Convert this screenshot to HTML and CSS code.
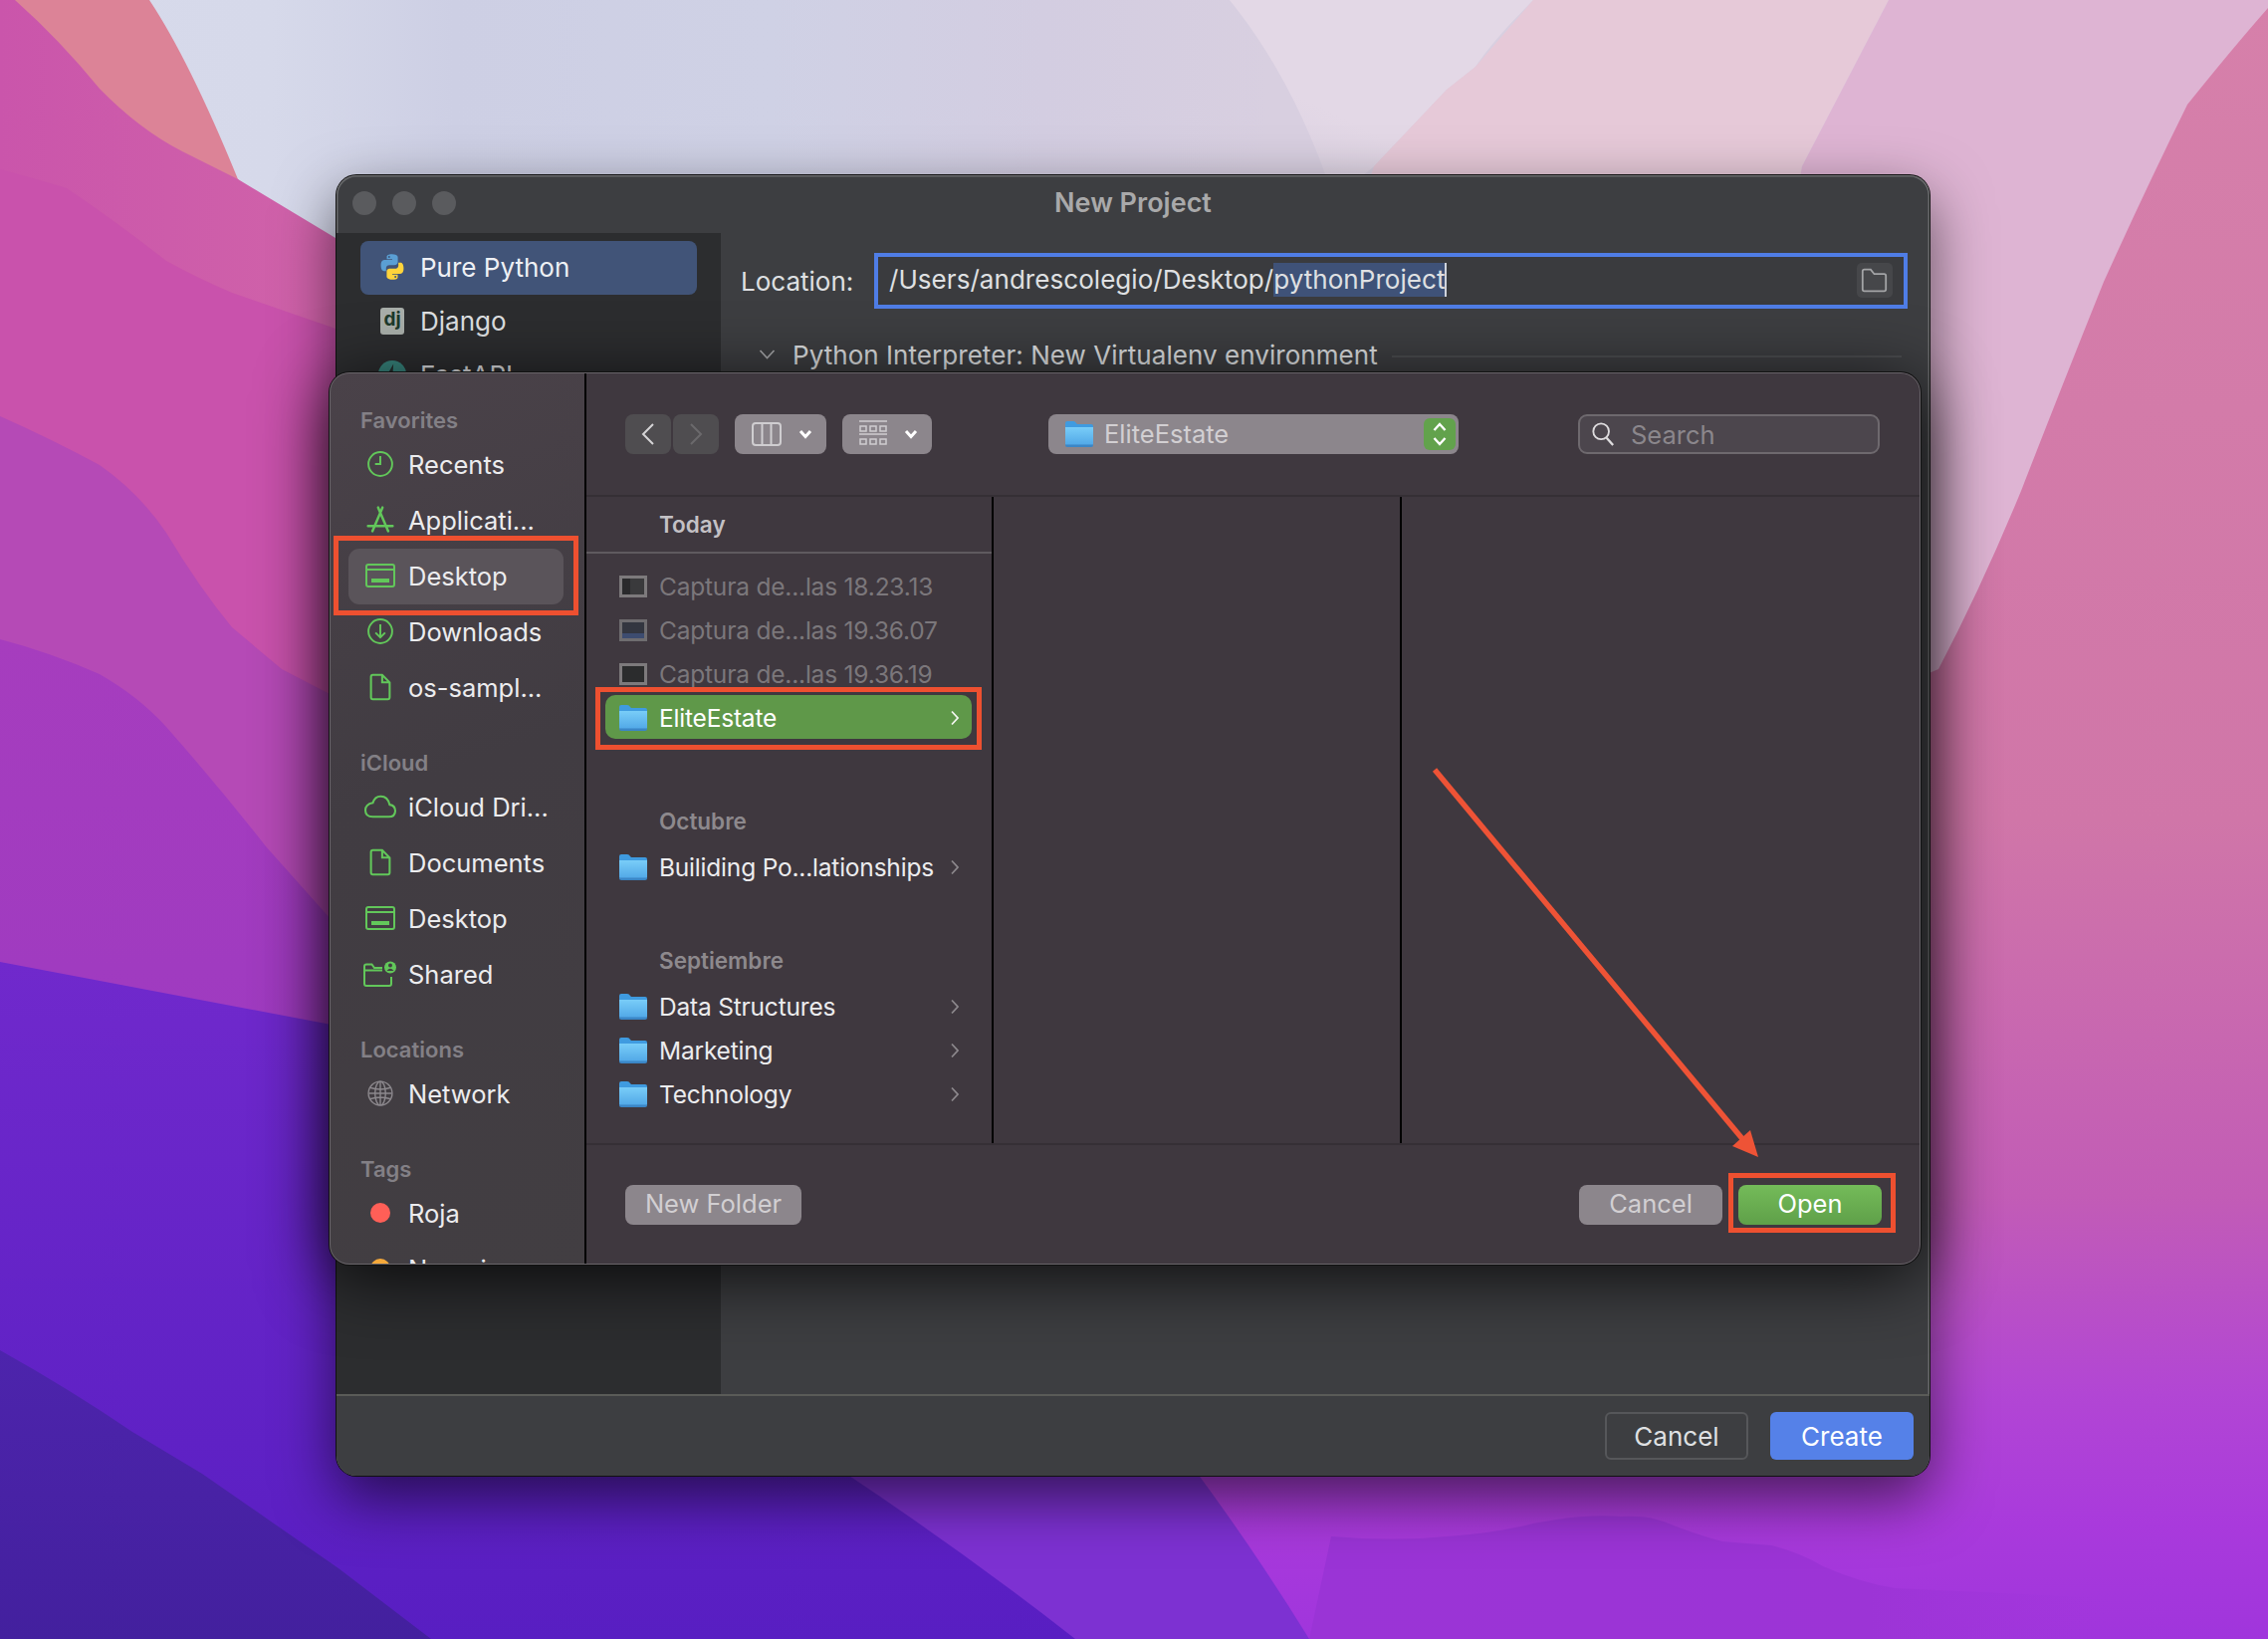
FILE: index.html
```html
<!DOCTYPE html>
<html lang="en">
<head>
    <meta charset="UTF-8" />
    <title>New Project</title>
    <link rel="stylesheet" href="styles.css">
</head>
<body>
    <!-- icon sheet -->
    <svg class="sheet" aria-hidden="true">
        <defs>
            <linearGradient id="folderFill" x1="0" y1="0" x2="0" y2="1">
                <stop offset="0" stop-color="#79cdf8"/>
                <stop offset="1" stop-color="#4fa6e6"/>
            </linearGradient>
        </defs>
        <symbol id="i-folder" viewBox="0 0 28 26">
            <path d="M0 2Q0 0 2 0H8Q10 0 11 2L12 3H26Q28 3 28 5V10H0Z" fill="#3f9be0"/>
            <path d="M0 6H28V23Q28 25 26 25H2Q0 25 0 23Z" fill="url(#folderFill)"/>
            <path d="M0 23.500H28V24Q28 26 26 26H2Q0 26 0 24Z" fill="#3b86c6"/>
        </symbol>
        <symbol id="i-clock" viewBox="-2 -2 34 34">
            <circle cx="15" cy="15" r="13.500" fill="none" stroke="currentColor" stroke-width="2.200"/>
            <path d="M15 6V15H9" fill="none" stroke="currentColor" stroke-width="2.200"/>
        </symbol>
        <symbol id="i-apps" viewBox="-2 -2 34 34">
            <path d="M12.500 1L24 28M17.500 1L6 28M1 22H29" fill="none" stroke="currentColor" stroke-width="2.800" stroke-linecap="round"/>
        </symbol>
        <symbol id="i-desktop" viewBox="-3 -3 36 30">
            <rect x="1" y="1" width="28" height="22" rx="2" fill="none" stroke="currentColor" stroke-width="2"/>
            <path d="M1 6H29" stroke="currentColor" stroke-width="2"/>
            <rect x="6" y="15" width="18" height="4" fill="currentColor"/>
        </symbol>
        <symbol id="i-down" viewBox="-2 -2 34 34">
            <circle cx="15" cy="15" r="13.500" fill="none" stroke="currentColor" stroke-width="2.200"/>
            <path d="M15 7V22M9.500 16.500L15 22L20.500 16.500" fill="none" stroke="currentColor" stroke-width="2.200"/>
        </symbol>
        <symbol id="i-doc" viewBox="0 -2 22 32">
            <path d="M3 1H13L21 9V25Q21 27 19 27H3Q1 27 1 25V3Q1 1 3 1ZM13 1V9H21" fill="none" stroke="currentColor" stroke-width="2.200"/>
        </symbol>
        <symbol id="i-cloud" viewBox="-1 -4 36 32">
            <path d="M9 23H26Q33 23 33 16.500Q33 11 27 10Q25 1 17.500 1Q11 1 9 8Q1 9.500 1 16Q1 23 9 23Z" fill="none" stroke="currentColor" stroke-width="2.200"/>
        </symbol>
        <symbol id="i-shared" viewBox="0 -2 34 30">
            <path d="M19 7H11L8.500 3.500H3Q1 3.500 1 5.500V23Q1 25 3 25H26Q28 25 28 23V16M1 9.500H19" fill="none" stroke="currentColor" stroke-width="2"/>
            <circle cx="27" cy="6.500" r="6" fill="currentColor"/>
            <circle cx="27" cy="4.500" r="2" fill="#423e42"/>
            <path d="M23.500 10Q27 5.500 30.500 10Z" fill="#423e42"/>
        </symbol>
        <symbol id="i-globe" viewBox="-2 -2 34 34">
            <circle cx="15" cy="15" r="13.500" fill="none" stroke="currentColor" stroke-width="1.600"/>
            <ellipse cx="15" cy="15" rx="6" ry="13.500" fill="none" stroke="currentColor" stroke-width="1.600"/>
            <path d="M3 8.500Q15 12.500 27 8.500M3 21.500Q15 17.500 27 21.500M2 15H28M15 2V28" fill="none" stroke="currentColor" stroke-width="1.600"/>
        </symbol>
        <symbol id="i-next" viewBox="0 0 10 16">
            <path d="M2 1.500L8 8L2 14.500" fill="none" stroke="currentColor" stroke-width="1.800"/>
        </symbol>
        <symbol id="i-caret" viewBox="0 0 14 10">
            <path d="M2 2L7 7.500L12 2" fill="none" stroke="currentColor" stroke-width="3"/>
        </symbol>
    </svg>

    <!-- wallpaper -->
    <svg class="wallpaper" viewBox="0 0 2278 1646" preserveAspectRatio="none" aria-hidden="true">
        <defs>
            <linearGradient id="wpSky" x1="0" y1="0" x2="1" y2="0">
                <stop offset="0" stop-color="#d7daeb"/>
                <stop offset=".12" stop-color="#d6d9ea"/>
                <stop offset=".2" stop-color="#cdcfe4"/>
                <stop offset=".34" stop-color="#cfd1e5"/>
                <stop offset=".46" stop-color="#d3cde1"/>
                <stop offset=".56" stop-color="#d8cfe0"/>
            </linearGradient>
            <linearGradient id="wpMist" x1="0" y1="1" x2=".6" y2=".2">
                <stop offset="0" stop-color="#e3d8e6" stop-opacity="0"/>
                <stop offset=".55" stop-color="#e3d8e6"/>
            </linearGradient>
            <linearGradient id="wpRight" gradientUnits="userSpaceOnUse" x1="0" y1="0" x2="0" y2="1646">
                <stop offset="0" stop-color="#d680aa"/>
                <stop offset=".5" stop-color="#d076a8"/>
                <stop offset=".73" stop-color="#c25cb6"/>
                <stop offset=".85" stop-color="#b246d4"/>
                <stop offset=".93" stop-color="#a93adc"/>
                <stop offset="1" stop-color="#a035dc"/>
            </linearGradient>
            <linearGradient id="wpHill" x1="0" y1="0" x2="1" y2="0">
                <stop offset="0" stop-color="#9a34d6"/>
                <stop offset=".7" stop-color="#9c34d6"/>
                <stop offset="1" stop-color="#a035dc" stop-opacity="0"/>
            </linearGradient>
            <linearGradient id="wpRose" gradientUnits="userSpaceOnUse" x1="0" y1="0" x2="337" y2="0">
                <stop offset="0" stop-color="#ca55ab"/>
                <stop offset="1" stop-color="#d063a9"/>
            </linearGradient>
            <linearGradient id="wpViolet" x1="0" y1="0" x2="0" y2="1">
                <stop offset="0" stop-color="#7029cc"/>
                <stop offset="1" stop-color="#581ec2"/>
            </linearGradient>
            <linearGradient id="wpPlum" x1="0" y1="0" x2="0" y2="1">
                <stop offset="0" stop-color="#a63dbe"/>
                <stop offset="1" stop-color="#9a39c2"/>
            </linearGradient>
            <linearGradient id="wpDeep" x1="0" y1="0" x2="0" y2="1">
                <stop offset="0" stop-color="#4d24ac"/>
                <stop offset="1" stop-color="#43209e"/>
            </linearGradient>
        </defs>
        <rect width="2278" height="1646" fill="url(#wpSky)"/>
        <path d="M1235 0H1540Q1500 40 1482 67L1453 90L1380 167L1340 200Q1300 80 1235 0Z" fill="url(#wpMist)"/>
        <path d="M1540 0H1897L1810 167L1770 400H1300L1380 167L1453 90L1482 67Z" fill="#e6c9d8"/>
        <path d="M1897 0H2278V800H1700L1810 167Z" fill="#deb4d3"/>
        <path d="M2285 0Q2245 45 2197 105Q2155 190 2113 283Q2070 390 2030 493Q1990 590 1947 672L1400 900V1000H1000V1646H2285Z" fill="url(#wpRight)"/>
        <path d="M1315 1646L1337 1543Q1400 1548 1453 1543Q1500 1540 1540 1530Q1590 1520 1628 1523Q1655 1522 1671 1528Q1700 1540 1730 1548L1780 1552Q1810 1560 1831 1573Q1870 1590 1904 1595L2120 1605V1646Z" fill="url(#wpHill)"/>
        <path d="M600 1000H1100L1203 1480Q1264 1563 1315 1646H0V1000Z" fill="#7d31d2"/>
        <path d="M15 0H150Q190 60 239 180L600 500H0Z" fill="#dc8397"/>
        <path d="M0 0H15Q60 40 100 89Q140 130 183 152L239 180L337 239L900 400V800H0Z" fill="url(#wpRose)"/>
        <path d="M0 170Q30 178 67 189Q120 225 167 262Q200 280 233 294L337 330L900 500V900H0Z" fill="#c952ac"/>
        <path d="M0 418Q50 440 100 467Q140 495 167 535Q200 590 233 630L283 672L337 700L900 900V1100H0Z" fill="#b54ab6"/>
        <path d="M0 642Q50 655 100 677Q140 700 167 730Q220 790 267 850L333 924L900 1100V1300H0Z" fill="url(#wpPlum)"/>
        <path d="M0 966L333 1029L700 1070L850 1480Q970 1560 1080 1646H0Z" fill="url(#wpViolet)"/>
        <path d="M0 1356Q70 1395 133 1438L203 1480L340 1575L433 1646H0Z" fill="url(#wpDeep)"/>
    </svg>

    <!-- New Project window -->
    <section class="window project">
        <header class="titlebar">
            <span class="lights"><i></i><i></i><i></i></span>
            <h1>New Project</h1>
        </header>
        <div class="project-body">
            <nav class="project-nav">
                <div class="nav-row active">
                    <svg class="nav-icon" viewBox="0 0 24 24">
                        <path fill="#5a9fd4" fill-rule="evenodd" d="M11.900 1C7 1 7.300 3.100 7.300 3.100V5.300H12V6H5.400S2.200 5.600 2.200 10.700S5 15.600 5 15.600H6.700V13.200S6.600 10.400 9.500 10.400H14.200S16.800 10.400 16.800 7.800V3.600S16.800 1 11.900 1ZM9.300 2.500A.85 .85 0 1 1 9.300 4.200A.85 .85 0 0 1 9.300 2.500Z"/>
                        <path fill="#ffd43b" fill-rule="evenodd" transform="rotate(180 12 12)" d="M11.900 1C7 1 7.300 3.100 7.300 3.100V5.300H12V6H5.400S2.200 5.600 2.200 10.700S5 15.600 5 15.600H6.700V13.200S6.600 10.400 9.500 10.400H14.200S16.800 10.400 16.800 7.800V3.600S16.800 1 11.900 1ZM9.300 2.500A.85 .85 0 1 1 9.300 4.200A.85 .85 0 0 1 9.300 2.500Z"/>
                    </svg>
                    Pure Python
                </div>
                <div class="nav-row">
                    <span class="dj">dj</span>
                    Django
                </div>
                <div class="nav-row">
                    <svg class="nav-icon" viewBox="0 0 24 24">
                        <circle cx="12" cy="12" r="12" fill="#38867e"/>
                        <path d="M13 3L7 13.500H11.500L10.500 21L17 10.500H12.500Z" fill="#26302f"/>
                    </svg>
                    FastAPI
                </div>
            </nav>
            <div class="project-main">
                <div class="location">
                    <label>Location:</label>
                    <div class="path-input">
                        <span class="path-text">/Users/andrescolegio/Desktop/<span class="selected">pythonProject</span></span>
                        <span class="browse">
                            <svg viewBox="0 0 30 30"><path d="M4 27Q2 27 2 25V5Q2 3 4 3H11L15 8H26Q28 8 28 10V25Q28 27 26 27Z" fill="none" stroke="#a3a4a6" stroke-width="2"/></svg>
                        </span>
                    </div>
                </div>
                <div class="interpreter">
                    <svg class="expand" viewBox="0 0 16 10"><path d="M1 1L8 8.500L15 1" fill="none" stroke="#a9aaac" stroke-width="1.600"/></svg>
                    <span>Python Interpreter: New Virtualenv environment</span>
                    <hr>
                </div>
            </div>
        </div>
        <footer class="project-foot">
            <button class="btn-outline">Cancel</button>
            <button class="btn-blue">Create</button>
        </footer>
    </section>

    <!-- open panel -->
    <section class="window panel">
        <aside class="sidebar">
            <h3>Favorites</h3>
            <div class="side-row"><svg class="side-icon"><use href="#i-clock"/></svg>Recents</div>
            <div class="side-row"><svg class="side-icon"><use href="#i-apps"/></svg>Applicati...</div>
            <div class="side-row current"><svg class="side-icon"><use href="#i-desktop"/></svg>Desktop</div>
            <div class="side-row"><svg class="side-icon"><use href="#i-down"/></svg>Downloads</div>
            <div class="side-row"><svg class="side-icon"><use href="#i-doc"/></svg>os-sampl...</div>
            <h3>iCloud</h3>
            <div class="side-row"><svg class="side-icon"><use href="#i-cloud"/></svg>iCloud Dri...</div>
            <div class="side-row"><svg class="side-icon"><use href="#i-doc"/></svg>Documents</div>
            <div class="side-row"><svg class="side-icon"><use href="#i-desktop"/></svg>Desktop</div>
            <div class="side-row"><svg class="side-icon"><use href="#i-shared"/></svg>Shared</div>
            <h3>Locations</h3>
            <div class="side-row"><svg class="side-icon grey"><use href="#i-globe"/></svg>Network</div>
            <h3>Tags</h3>
            <div class="side-row"><span class="side-icon"><i class="tag red"></i></span>Roja</div>
            <div class="side-row"><span class="side-icon"><i class="tag orange"></i></span>Naranja</div>
        </aside>
        <div class="browser">
            <div class="toolbar">
                <div class="nav-pair">
                    <button class="tool back"><svg viewBox="0 0 14 24"><path d="M12 2L2 12L12 22" fill="none" stroke="currentColor" stroke-width="2"/></svg></button>
                    <button class="tool forward"><svg viewBox="0 0 14 24"><path d="M2 2L12 12L2 22" fill="none" stroke="currentColor" stroke-width="2"/></svg></button>
                </div>
                <button class="tool view columns">
                    <svg class="view-icon" viewBox="0 0 30 24"><rect x="1" y="1" width="28" height="22" rx="3" fill="none" stroke="currentColor" stroke-width="2"/><path d="M10.500 1V23M19.500 1V23" stroke="currentColor" stroke-width="2"/></svg>
                    <svg class="caret"><use href="#i-caret"/></svg>
                </button>
                <button class="tool view grid">
                    <svg class="view-icon" viewBox="0 0 28 28"><path d="M0 1H28M0 14H28" stroke="currentColor" stroke-width="1.500"/><path d="M1 6H7V11H1ZM11 6H17V11H11ZM21 6H27V11H21ZM1 19H7V24H1ZM11 19H17V24H11ZM21 19H27V24H21Z" fill="none" stroke="currentColor" stroke-width="1.500"/></svg>
                    <svg class="caret"><use href="#i-caret"/></svg>
                </button>
                <div class="location-popup">
                    <svg class="file-icon"><use href="#i-folder"/></svg>
                    <span class="popup-label">EliteEstate</span>
                    <span class="stepper">
                        <svg viewBox="0 0 16 28"><path d="M2.500 10L8 4L13.500 10M2.500 18L8 24L13.500 18" fill="none" stroke="#fff" stroke-width="2.400"/></svg>
                    </span>
                </div>
                <div class="search">
                    <svg viewBox="0 0 26 28"><circle cx="11" cy="11" r="8.500" fill="none" stroke="#dedcde" stroke-width="2"/><path d="M17 18L24 26" stroke="#dedcde" stroke-width="2.500"/></svg>
                    <span>Search</span>
                </div>
            </div>

            <div class="columns-view">
                <div class="column first">
                    <div class="group today">
                        <h4 class="today-head">Today</h4>
                        <div class="file dim"><i class="thumb t1"></i>Captura de...las 18.23.13</div>
                        <div class="file dim"><i class="thumb t2"></i>Captura de...las 19.36.07</div>
                        <div class="file dim"><i class="thumb t3"></i>Captura de...las 19.36.19</div>
                        <div class="file picked"><svg class="file-icon"><use href="#i-folder"/></svg>EliteEstate<svg class="next"><use href="#i-next"/></svg></div>
                    </div>
                    <div class="group">
                        <h4>Octubre</h4>
                        <div class="file"><svg class="file-icon"><use href="#i-folder"/></svg>Builiding Po...lationships<svg class="next"><use href="#i-next"/></svg></div>
                    </div>
                    <div class="group">
                        <h4>Septiembre</h4>
                        <div class="file"><svg class="file-icon"><use href="#i-folder"/></svg>Data Structures<svg class="next"><use href="#i-next"/></svg></div>
                        <div class="file"><svg class="file-icon"><use href="#i-folder"/></svg>Marketing<svg class="next"><use href="#i-next"/></svg></div>
                        <div class="file"><svg class="file-icon"><use href="#i-folder"/></svg>Technology<svg class="next"><use href="#i-next"/></svg></div>
                    </div>
                </div>
                <div class="column second"></div>
                <div class="column third"></div>
            </div>

            <div class="panel-foot">
                <button class="btn-grey new-folder">New Folder</button>
                <div class="panel-actions">
                    <button class="btn-grey">Cancel</button>
                    <button class="btn-green">Open</button>
                </div>
            </div>
        </div>
    </section>

    <!-- red annotations drawn over the screenshot -->
    <div class="mark mark-desktop"></div>
    <div class="mark mark-folder"></div>
    <div class="mark mark-open"></div>
    <svg class="arrow" viewBox="0 0 2278 1646" aria-hidden="true">
        <path d="M1441 773L1752 1146" stroke="#ee5336" stroke-width="5.500"/>
        <path d="M1766 1162L1740 1151L1758 1135Z" fill="#ee5336"/>
    </svg>
</body>
</html>
```

FILE: styles.css
```css
* {
    box-sizing: border-box;
}
html, body {
    margin: 0;
    padding: 0;
}
body {
    position: relative;
    width: 2278px;
    height: 1646px;
    overflow: hidden;
    font-family: "Inter", "Liberation Sans", sans-serif;
    font-size: 25.500px;
    color: #e8e8ea;
}
button {
    font: inherit;
    border: none;
    padding: 0;
}
h1, h3, h4 {
    margin: 0;
}
.sheet {
    position: absolute;
    width: 0;
    height: 0;
}
.wallpaper {
    position: absolute;
    left: 0;
    top: 0;
    width: 2278px;
    height: 1646px;
}

/* windows on the desktop */
.window {
    position: absolute;
    overflow: hidden;
}
.project {
    left: 338px;
    top: 176px;
    width: 1600px;
    height: 1306px;
    display: flex;
    flex-direction: column;
    background: #3d3e41;
    border-radius: 20px;
    box-shadow: 0 0 0 1px #111, inset 0 0 0 1.5px #68696b, 0 22px 60px rgba(0, 0, 0, 0.6);
}
.panel {
    left: 331px;
    top: 374px;
    width: 1598px;
    height: 896px;
    display: flex;
    background: #3f383f;
    border-radius: 20px;
    box-shadow: 0 0 0 1px #111, 0 12px 70px rgba(0, 0, 0, 0.8);
}
.panel::after {
    content: "";
    position: absolute;
    inset: 0;
    border-radius: 20px;
    border: 1.5px solid #69656a;
    pointer-events: none;
}

/* title bar */
.titlebar {
    position: relative;
    flex: 0 0 58px;
    display: flex;
    align-items: center;
    justify-content: center;
    padding-bottom: 4px;
}
.lights {
    position: absolute;
    left: 16px;
    top: 16px;
    display: flex;
    gap: 16px;
}
.lights i {
    width: 24px;
    height: 24px;
    border-radius: 50%;
    background: #5a5b5e;
}
.titlebar h1 {
    font-size: 27px;
    font-weight: 600;
    color: #a9a9aa;
}

/* project window body */
.project-body {
    flex: 1;
    display: flex;
    min-height: 0;
}
.project-nav {
    width: 386px;
    padding: 8px 24px 0;
    background: #2c2d2f;
}
.nav-row {
    display: flex;
    align-items: center;
    gap: 14px;
    height: 54px;
    padding: 0 0 2px 18px;
    border-radius: 8px;
    font-size: 26px;
    color: #dfe0e2;
}
.nav-row.active {
    background: #415478;
    color: #eef0f4;
}
.nav-icon {
    width: 28px;
    height: 28px;
    flex: none;
}
.dj {
    width: 24px;
    height: 27px;
    margin: 0 2px;
    flex: none;
    border-radius: 3px;
    background: #a9afaa;
    color: #1d3a2c;
    font-size: 19px;
    font-weight: 700;
    line-height: 24px;
    text-align: center;
}
.project-main {
    flex: 1;
    padding: 20px 22px 0 21px;
}
.location {
    display: flex;
    align-items: center;
}
.location label {
    width: 134px;
    font-size: 26px;
    padding-top: 1px;
    margin-left: -1px;
    color: #dfe0e2;
}
.path-input {
    flex: 1;
    height: 56px;
    display: flex;
    align-items: center;
    justify-content: space-between;
    padding: 0 11px 0 11px;
    border: 4px solid #4f7de6;
    background: #3a3b3e;
    font-size: 26px;
    letter-spacing: 0.05px;
    color: #dfe0e2;
}
.path-text {
    line-height: 34px;
    margin-top: -3px;
}
.selected {
    display: inline-block;
    background: #3f5278;
    border-right: 2px solid #cfd3dc;
}
.browse {
    width: 36px;
    height: 35px;
    margin-top: -2px;
    padding: 4px;
    border-radius: 5px;
    background: #46474a;
    display: flex;
}
.interpreter {
    display: flex;
    align-items: center;
    margin: 30px 6px 0 17px;
    height: 32px;
    font-size: 26px;
    letter-spacing: 0.05px;
    color: #dfe0e2;
}
.expand {
    width: 17px;
    height: 10px;
    margin-right: 17px;
    flex: none;
}
.interpreter hr {
    flex: 1;
    margin: 4px 0 0 14px;
    border: none;
    height: 2px;
    background: #4b4c4f;
}
.project-foot {
    flex: 0 0 82px;
    display: flex;
    align-items: flex-start;
    justify-content: flex-end;
    gap: 22px;
    padding: 16px 16px 0 0;
    border-top: 2px solid #5a5b58;
    background: #3d3e41;
}
.btn-outline, .btn-blue {
    width: 144px;
    height: 48px;
    border-radius: 6px;
    font-size: 26px;
}
.btn-outline {
    background: transparent;
    border: 2.5px solid #56575a;
    color: #dfe0e2;
}
.btn-blue {
    background: #5581e8;
    color: #fff;
}

/* finder sidebar */
.sidebar {
    width: 258px;
    flex: none;
    padding: 31px 0 0 19px;
    overflow: hidden;
    border-right: 2px solid #000;
    background: linear-gradient(160deg, #4a4249 0%, #413c42 45%, #423e42 100%);
}
.sidebar h3 {
    height: 34px;
    margin: 30px 0 0 12px;
    font-size: 22px;
    font-weight: 600;
    line-height: 34px;
    color: #838086;
}
.sidebar h3:first-child {
    margin-top: 0;
}
.side-row {
    display: flex;
    align-items: center;
    gap: 10px;
    width: 216px;
    height: 56px;
    padding: 0 0 2px 14px;
    border-radius: 11px;
    white-space: nowrap;
    color: #ececee;
}
.side-row.current {
    background: #5a545a;
}
.side-icon {
    width: 36px;
    height: 30px;
    flex: none;
    color: #62c75a;
    display: flex;
    align-items: center;
    justify-content: center;
}
.side-icon.grey {
    color: #8c888d;
}
.tag {
    width: 20px;
    height: 20px;
    border-radius: 50%;
}
.red {
    background: #ff5f57;
}
.orange {
    background: #f5a93a;
}

/* toolbar */
.browser {
    flex: 1;
    display: flex;
    flex-direction: column;
    min-width: 0;
}
.toolbar {
    flex: 0 0 125px;
    display: flex;
    align-items: center;
    padding: 0 41px 0 39px;
    border-bottom: 2px solid #352f35;
}
.nav-pair {
    display: flex;
    gap: 2px;
    margin-right: 16px;
}
.tool {
    height: 40px;
    border-radius: 8px;
    display: flex;
    align-items: center;
    justify-content: center;
}
.back, .forward {
    width: 46px;
    background: #4f4d50;
}
.back {
    color: #d5d4d6;
}
.forward {
    color: #6b696c;
}
.tool svg {
    width: 14px;
    height: 24px;
}
.view {
    padding-left: 3px;
    background: #8c868c;
    color: #cfcdd0;
    gap: 17px;
}
.columns {
    width: 92px;
    margin-right: 16px;
}
.grid {
    width: 90px;
}
.tool .view-icon {
    width: 30px;
    height: 24px;
}
.grid .view-icon {
    width: 28px;
    height: 28px;
}
.tool .caret {
    width: 14px;
    height: 10px;
    color: #fff;
}
.location-popup {
    width: 412px;
    height: 40px;
    margin: 0 120px 0 117px;
    display: flex;
    align-items: center;
    padding: 0 3px 0 17px;
    border-radius: 8px;
    background: #8c868c;
    color: #d2cfd2;
}
.location-popup .file-icon {
    margin-right: 11px;
}
.popup-label {
    padding-bottom: 1px;
}
.stepper {
    width: 32px;
    height: 32px;
    margin-left: auto;
    border-radius: 6px;
    background: #62a24c;
    display: flex;
    align-items: center;
    justify-content: center;
}
.stepper svg {
    width: 16px;
    height: 28px;
}
.search {
    width: 303px;
    height: 40px;
    display: flex;
    align-items: center;
    gap: 16px;
    padding-left: 11px;
    border: 2px solid #6e696e;
    border-radius: 9px;
    background: #4c464d;
    color: #8b878c;
}
.search span {
    padding-top: 2px;
}
.search svg {
    width: 24px;
    height: 26px;
    flex: none;
}

/* column browser */
.columns-view {
    flex: 1;
    display: flex;
    min-height: 0;
}
.column {
    border-right: 2px solid #000;
}
.first {
    width: 409px;
}
.second {
    width: 410px;
}
.third {
    flex: 1;
    border-right: none;
}
.group {
    margin-bottom: 48px;
}
.today {
    margin-bottom: 58px;
}
.group h4 {
    height: 44px;
    margin-bottom: 4px;
    padding-left: 73px;
    font-size: 22.500px;
    font-weight: 600;
    line-height: 50px;
    color: #8d898d;
}
.group .today-head {
    height: 57px;
    margin-bottom: 10px;
    padding-top: 3px;
    border-bottom: 2px solid #5f5a5f;
    color: #c4c1c5;
}
.file {
    display: flex;
    align-items: center;
    gap: 12px;
    width: 368px;
    height: 44px;
    margin-left: 19px;
    padding: 2px 0 0 14px;
    border-radius: 10px;
    font-size: 24.500px;
    letter-spacing: -0.2px;
    white-space: nowrap;
    color: #ececee;
}
.file.dim {
    color: #7b777b;
}
.file.picked {
    background: #5f9849;
    color: #fff;
}
.file-icon {
    width: 28px;
    height: 26px;
    flex: none;
}
.next {
    width: 10px;
    height: 16px;
    margin-left: auto;
    margin-right: 12px;
    color: #8c888c;
}
.picked .next {
    color: #f2f5ef;
}
.thumb {
    display: block;
    width: 28px;
    height: 22px;
    flex: none;
    border: 3px solid #7d7a7c;
    background: linear-gradient(90deg, #2a2a2c 35%, #3a3a3c 35%);
}
.t2 {
    border-color: #6f6d70;
    background: linear-gradient(#333640 70%, #3d4c70 70%);
}
.t3 {
    background: #2b2c2d;
}

/* panel footer */
.panel-foot {
    flex: 0 0 122px;
    display: flex;
    align-items: center;
    justify-content: space-between;
    padding: 0 39px 0 39px;
    border-top: 2px solid #352f35;
}
.panel-actions {
    display: flex;
    gap: 16px;
}
.btn-grey, .btn-green {
    width: 144px;
    height: 40px;
    padding-bottom: 4px;
    border-radius: 8px;
}
.btn-grey {
    background: #8c868c;
    color: #d2cfd2;
}
.new-folder {
    width: 177px;
}
.btn-green {
    background: linear-gradient(#74bb59, #5fa049);
    color: #fff;
}

/* annotations */
.mark {
    position: absolute;
    border: 5px solid #ee5030;
}
.mark-desktop {
    left: 335px;
    top: 538px;
    width: 246px;
    height: 80px;
}
.mark-folder {
    left: 598px;
    top: 690px;
    width: 388px;
    height: 63px;
}
.mark-open {
    left: 1736px;
    top: 1178px;
    width: 168px;
    height: 60px;
}
.arrow {
    position: absolute;
    left: 0;
    top: 0;
    width: 2278px;
    height: 1646px;
    pointer-events: none;
}
```
